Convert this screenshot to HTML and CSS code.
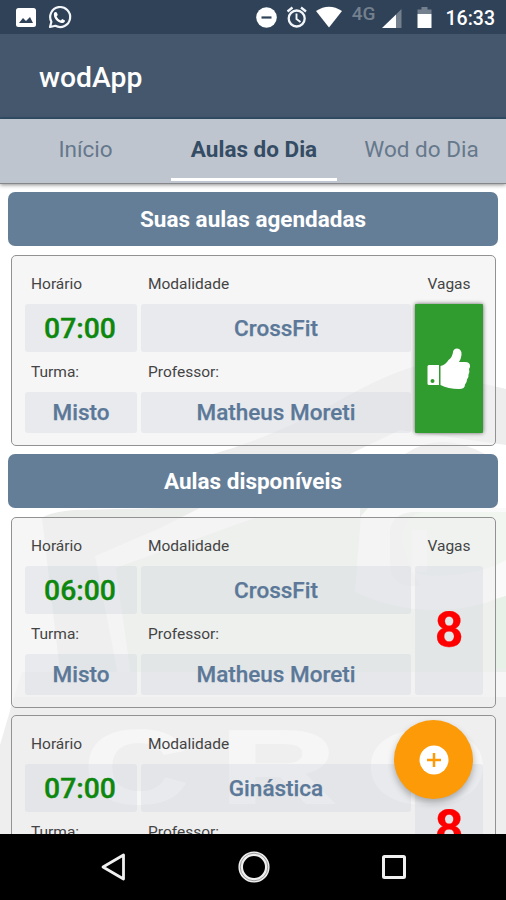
FILE: index.html
```html
<!DOCTYPE html>
<html lang="pt-BR">
<head>
<meta charset="utf-8">
<title>wodApp</title>
<link rel="stylesheet" href="styles.css">
</head>
<body>
<div class="phone">
  <header class="status">
    <svg class="status-icons" width="506" height="34" viewBox="0 0 506 34">
      <rect x="16" y="8" width="20" height="19" rx="2.5" fill="#fff"/>
      <path d="M19 23l4-5 3 3 4-4 3 6z" fill="#2f4258"/>
      <path d="M50 27l1.400-5.200a10 10 0 1 1 4 4z" fill="none" stroke="#f4f7fa" stroke-width="2.200" stroke-linejoin="round"/>
      <path d="M54 13c1-1.500 2.500-1.500 3 0l.8 2-1.200 1.600c1 2 2.300 3.100 4.200 3.900l1.400-1.500 2.800 1.400c.2 1.600-1.500 2.800-3.500 2.600-4.500-.5-8.500-5.500-7.500-10z" fill="#fff"/>
      <circle cx="266.500" cy="17.500" r="10.300" fill="#fff"/>
      <path d="M261.500 17.500h10" stroke="#2f4258" stroke-width="2.200"/>
      <g fill="none" stroke="#f4f7fa" stroke-width="2.300">
        <circle cx="296.700" cy="18.500" r="8"/>
        <path d="M287.500 11.500l5-4M306 11.500l-5-4"/>
        <path d="M296.500 13.500v5.500l4 3" stroke-width="1.900"/>
      </g>
      <path d="M316 11Q329 2.500 342 11L329 27.500z" fill="#fff"/>
      <path d="M401.500 9v19H396V14.500z" fill="#74808e"/>
      <path d="M396 14.500V28H382z" fill="#fff"/>
      <path d="M417.500 14V9.500h4V7h6v2.500h4V14z" fill="#74808e"/>
      <path d="M417.500 14h14v14h-14z" fill="#fff"/>
    </svg>
    <span class="network">4G</span>
    <span class="clock">16:33</span>
  </header>
  <div class="appbar"><h1>wodApp</h1></div>
  <nav class="tabs">
    <a class="tab">Início</a>
    <a class="tab active">Aulas do Dia</a>
    <a class="tab">Wod do Dia</a>
  </nav>
  <main class="content">
    <svg class="watermark" width="506" height="649" viewBox="0 185 506 649">
      <path d="M213 454Q270 438 335 403Q385 374 420 365Q465 380 506 389V445L400 430L350 454z" fill="#ededed"/>
      <path d="M405 454Q440 430 485 454z" fill="#efefef"/>
      <path d="M42 518Q50 512 75 510L160 508H506V672H60z" fill="#ebedeb"/>
      <path d="M95 556L160 528L200 508H250L506 508V516L255 518L116 568L131 675H118z" fill="#f9f9f9"/>
      <path d="M116 568L255 518H360V508H506V675H131z" fill="#ebefeb"/>
      <path d="M361 516L368 508H506V596Q430 626 355 592z" fill="#fafafa"/>
      <path d="M412 512H506V528H424Q412 530 412 545V570L420 586H410Q390 584 390 562V530Q392 514 412 512z" fill="#eff1ef"/>
      <path d="M402 540Q404 514 425 512H506V560Q480 576 430 576L412 572z" fill="#f1f6f1"/>
      <path d="M412 530H427V572H412z" fill="#f7f7f7"/>
      <path d="M492 600L506 596V668H492z" fill="#e8f1e7"/>
      <path d="M22 672H506V697H14z" fill="#f6f6f6"/>
      <path d="M14 697H506V834H0V745z" fill="#eee"/>
      <g class="brand" fill="#fff" stroke="#fff" stroke-width="2">
        <text x="84" y="803" textLength="104" lengthAdjust="spacingAndGlyphs">C</text>
        <text x="220" y="803" textLength="116" lengthAdjust="spacingAndGlyphs">R</text>
        <text x="366" y="803" textLength="122" lengthAdjust="spacingAndGlyphs">O</text>
      </g>
    </svg>
    <h2 class="band">Suas aulas agendadas</h2>
    <section class="card">
      <span class="label">Horário</span><span class="label">Modalidade</span><span class="label mid">Vagas</span>
      <div class="cell time">07:00</div><div class="cell">CrossFit</div>
      <div class="cell slots booked">
        <svg width="46" height="44" viewBox="0 0 46 44">
          <path d="M3 19h10v20H3q-1.500 0-1.500-1.500V20.500q0-1.500 1.500-1.500z" fill="#fff"/>
          <circle cx="6.500" cy="35" r="2" fill="#309b2f"/>
          <path d="M14.500 20q5-1 8-6 4-3 4.500-8 .5-3.500 4-3.500 5 .5 4.500 6.500-.5 4-2.500 7h6q5 0 5 4 0 2-1 3 1 3-.5 5.500 .5 3-1.500 5 0 3-2 5 0 4.500-6 4.500-11 0-18.500-4z" fill="#fff"/>
        </svg>
      </div>
      <span class="label">Turma:</span><span class="label">Professor:</span>
      <div class="cell">Misto</div><div class="cell">Matheus Moreti</div>
    </section>
    <h2 class="band">Aulas disponíveis</h2>
    <section class="card">
      <span class="label">Horário</span><span class="label">Modalidade</span><span class="label mid">Vagas</span>
      <div class="cell time">06:00</div><div class="cell">CrossFit</div>
      <div class="cell slots">8</div>
      <span class="label">Turma:</span><span class="label">Professor:</span>
      <div class="cell">Misto</div><div class="cell">Matheus Moreti</div>
    </section>
    <section class="card">
      <span class="label">Horário</span><span class="label">Modalidade</span><span class="label mid"></span>
      <div class="cell time">07:00</div><div class="cell">Ginástica</div>
      <div class="cell slots">8</div>
      <span class="label">Turma:</span><span class="label">Professor:</span>
    </section>
    <button class="fab" aria-label="Adicionar">
      <svg width="30" height="30" viewBox="0 0 30 30"><circle cx="15" cy="15" r="14.500" fill="#fff"/><path d="M8 15h14M15 8v14" stroke="#fc9a08" stroke-width="2.500"/></svg>
    </button>
  </main>
  <footer class="navbar">
    <svg width="26" height="30" viewBox="0 0 26 30"><path d="M23.500 3v24L3 15z" fill="none" stroke="#f0f0f0" stroke-width="2.800" stroke-linejoin="round"/></svg>
    <svg width="34" height="34" viewBox="0 0 34 34"><circle cx="17" cy="17" r="13.300" fill="none" stroke="#f0f0f0" stroke-width="4.600"/><circle cx="17" cy="17" r="13.800" fill="none" stroke="#777" stroke-width=".7"/></svg>
    <svg width="26" height="26" viewBox="0 0 26 26"><rect x="2.500" y="2.500" width="21" height="21" rx="1" fill="none" stroke="#f0f0f0" stroke-width="3"/></svg>
  </footer>
</div>
</body>
</html>
```
FILE: styles.css
```css
* { box-sizing: border-box; }
body { margin: 0; font-family: Roboto, "Liberation Sans", sans-serif; }
.phone { width: 506px; height: 900px; overflow: hidden; display: flex; flex-direction: column; background: #fff; }

.status { height: 34px; flex: none; position: relative; background: #2f4258; display: flex; align-items: center; justify-content: flex-end; padding-right: 11px; color: #fff; }
.status-icons { position: absolute; left: 0; top: 0; }
.network { position: relative; margin-right: 70px; top: -4px; font-size: 19px; font-weight: 500; color: #74808e; }
.clock { position: relative; top: 1px; font-size: 19.500px; font-weight: 500; }

.appbar { height: 85px; flex: none; background: #45576c; border-bottom: 2px solid #33506a; display: flex; align-items: center; padding: 3px 0 0 39px; }
.appbar h1 { margin: 0; font-size: 28.300px; font-weight: 500; color: #fff; }

.tabs { height: 65px; flex: none; display: grid; grid-template-columns: 171px 166px 169px; background: #bec5cf; border-bottom: 1px solid #85878b; box-shadow: 0 1px 4px rgba(0, 0, 0, .45); position: relative; z-index: 2; }
.tab { text-align: center; font-size: 22.500px; line-height: 60px; height: 62px; color: #66788b; }
.tab.active { font-weight: 700; color: #344c64; border-bottom: 3px solid #fff; }

.content { flex: none; position: relative; height: 650px; overflow: hidden; padding: 8px 8px 0; }
.watermark { position: absolute; left: 0; top: 1px; }
.brand { font: 700 104px "Liberation Sans", sans-serif; }
.band { position: relative; margin: 0 0 9px; height: 54px; border-radius: 7px; background: #657e98; color: #fff; text-align: center; font-size: 22.500px; font-weight: 700; line-height: 54px; }
.card { position: relative; margin: 0 2px 8px 3px; height: 191px; border: 1.500px solid #929292; border-radius: 5px; background: rgba(240, 240, 240, .6); display: grid; grid-template-columns: 112px 270px 68px; grid-template-rows: 48px 48px 40px 41px; column-gap: 4px; padding: 0 0 0 13px; align-content: start; }
.card + .card { margin-top: -1px; }
.label { font-size: 15.500px; color: #444; line-height: 56px; padding-left: 6px; }
.label:nth-of-type(3n+2) { padding-left: 7px; }
.label.mid { text-align: center; padding: 0; }
.label:nth-of-type(n+4) { line-height: 40px; }
.cell { border-radius: 3px; background: rgba(202, 210, 220, .33); color: #5b7898; display: flex; align-items: center; justify-content: center; font-size: 22.500px; font-weight: 500; padding: 0 0 1px; -webkit-text-stroke: .25px currentColor; }
.time { font-size: 28.300px; color: #0d870d; -webkit-text-stroke-width: .4px; padding: 0 2px 0 0; }
.slots { grid-column: 3; grid-row: 2 / 5; font-size: 50px; font-weight: 700; color: #f00; padding: 0 0 2px; }
.booked { background: #309b2f; border-radius: 1px; box-shadow: 0 0 4px rgba(0, 0, 0, .6); }

.fab { position: absolute; left: 394px; top: 536px; width: 79px; height: 79px; border: 0; border-radius: 50%; background: #fc9a08; box-shadow: 0 4px 7px rgba(0, 0, 0, .28); display: flex; align-items: center; justify-content: center; padding: 0; }

.navbar { flex: 1; background: #000; display: flex; align-items: center; justify-content: space-between; padding: 0 99px 0 100px; }
```
